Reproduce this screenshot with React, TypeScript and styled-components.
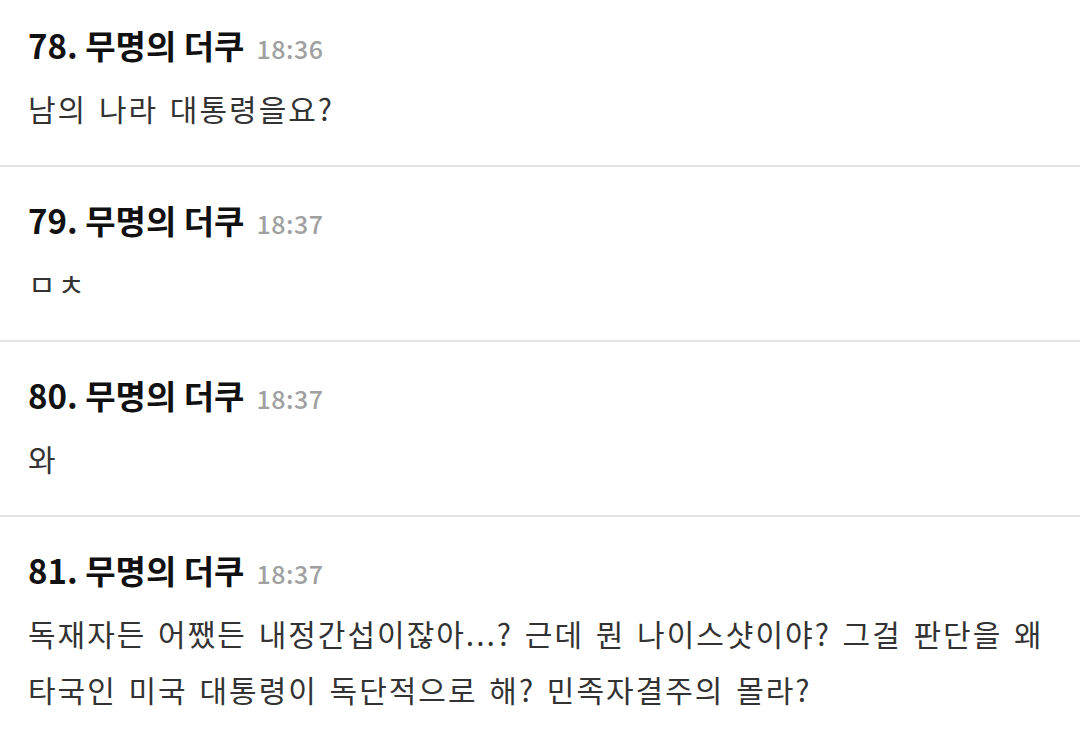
import { createGlobalStyle, styled } from "styled-components";

const GlobalStyle = createGlobalStyle`
  html, body {
    margin: 0;
    padding: 0;
    background: #ffffff;
  }
  body {
    font-family: "Noto Sans CJK KR", "Noto Sans", sans-serif;
    overflow: hidden;
  }
`;

const List = styled.div`
  display: flex;
  flex-direction: column;
`;

const Comment = styled.div<{ $first?: boolean }>`
  display: flex;
  flex-direction: column;
  gap: 15px;
  padding: ${(p) => (p.$first ? "25px" : "33px")} 10px 29px 28px;
  border-top: ${(p) => (p.$first ? "none" : "2px solid #e4e4e4")};
`;

const Head = styled.div`
  display: flex;
  align-items: baseline;
  gap: 12px;
  height: 40px;
  line-height: 40px;
`;

const Name = styled.span`
  font-size: 33px;
  font-weight: 700;
  color: #111111;
`;

const Time = styled.span`
  font-size: 25px;
  font-weight: 500;
  letter-spacing: 0.5px;
  color: #a0a0a0;
`;

const Body = styled.div`
  font-size: 30px;
  line-height: 56px;
  letter-spacing: 2px;
  word-spacing: 3px;
  word-break: keep-all;
  color: #333333;
`;

const comments = [
  { no: 78, time: "18:36", text: "남의 나라 대통령을요?" },
  { no: 79, time: "18:37", text: "ㅁㅊ" },
  { no: 80, time: "18:37", text: "와" },
  {
    no: 81,
    time: "18:37",
    text: "독재자든 어쨌든 내정간섭이잖아...? 근데 뭔 나이스샷이야? 그걸 판단을 왜 타국인 미국 대통령이 독단적으로 해? 민족자결주의 몰라?",
  },
];

const App = () => {
  return (
    <>
      <GlobalStyle />
      <List>
        {comments.map((c, i) => (
          <Comment key={c.no} $first={i === 0}>
            <Head>
              <Name>{c.no}. 무명의 더쿠</Name>
              <Time>{c.time}</Time>
            </Head>
            <Body>{c.text}</Body>
          </Comment>
        ))}
      </List>
    </>
  );
};

export default App;
